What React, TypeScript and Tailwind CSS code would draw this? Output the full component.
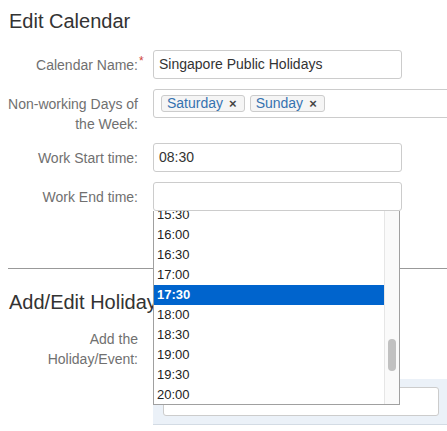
const times = ["15:30", "16:00", "16:30", "17:00", "17:30", "18:00", "18:30", "19:00", "19:30", "20:00"];

function Label({ children }: { children: React.ReactNode }) {
  return (
    <div className="w-[138px] shrink-0 pt-[5px] text-right text-[14px] leading-[20px] text-[#707070]">
      {children}
    </div>
  );
}

function TextInput({ value }: { value?: string }) {
  return (
    <div className="ml-[15px] h-[29px] w-[249px] rounded-[3px] border border-[#ccc] bg-white pl-[5px] text-[14px] leading-[27px] text-[#333]">
      {value}
    </div>
  );
}

function Chip({ label }: { label: string }) {
  return (
    <span className="flex h-[17px] items-center rounded-[3px] border border-[#ccc] bg-[#f5f5f5] pl-[5px] pr-[7px] text-[14px] leading-[15px] text-[#3572b0]">
      {label}
      <span className="ml-[6px] text-[13px] font-bold text-[#444]">×</span>
    </span>
  );
}

function TimeDropdown() {
  return (
    <div className="absolute left-0 top-[29px] z-10 flex h-[194px] w-[247px] overflow-hidden border-x border-b border-[#a0a0a0] bg-white">
      <div className="flex-1 overflow-hidden">
        <div className="mt-[-6px]">
          {times.map((t) => (
            <div
              key={t}
              className={
                t === "17:30"
                  ? "h-[20px] bg-[#0064cd] pl-[3px] text-[13px] font-bold leading-[20px] text-white"
                  : "h-[20px] pl-[3px] text-[13px] leading-[20px] text-[#222]"
              }
            >
              {t}
            </div>
          ))}
        </div>
      </div>
      <div className="flex w-[15px] shrink-0 justify-center border-l border-[#e6e6e6] bg-[#fafafa] pt-[128px]">
        <div className="h-[32px] w-[8px] rounded-full bg-[#c1c1c1]" />
      </div>
    </div>
  );
}

export default function App() {
  return (
    <div className="relative h-[431px] w-full overflow-hidden bg-white font-['Liberation_Sans',Arial,sans-serif]">
      <h2 className="pl-[9px] pt-[9px] text-[20px] font-normal leading-[24px] text-[#333]">Edit Calendar</h2>

      <div className="mt-[17px]">
        <div className="flex">
          <Label>
            <span className="relative">
              Calendar Name:
              <span className="absolute left-full top-[-6px] pl-[1px] text-[12px] text-[#d04437]">*</span>
            </span>
          </Label>
          <TextInput value="Singapore Public Holidays" />
        </div>

        <div className="mt-[10px] flex">
          <Label>
            Non-working Days of
            <br />
            the Week:
          </Label>
          <div className="ml-[15px] flex h-[29px] w-[320px] shrink-0 items-center gap-[5px] rounded-[3px] border border-[#ccc] pl-[7px]">
            <Chip label="Saturday" />
            <Chip label="Sunday" />
          </div>
        </div>

        <div className="mt-[9px] flex">
          <Label>Work Start time:</Label>
          <TextInput value="08:30" />
        </div>

        <div className="mt-[10px] flex">
          <Label>Work End time:</Label>
          <div className="relative">
            <TextInput />
            <div className="absolute left-[15px] top-0">
              <TimeDropdown />
            </div>
          </div>
        </div>
      </div>

      <hr className="ml-[8px] mt-[57px] border-t border-[#999]" />

      <h2 className="mt-[21px] pl-[9px] text-[20px] font-normal leading-[24px] text-[#333]">Add/Edit Holiday</h2>

      <div className="mt-[10px] flex">
        <Label>
          Add the
          <br />
          Holiday/Event:
        </Label>
        <div className="ml-[15px] flex-1 pt-[55px]">
          <div className="border-b border-[#d3dbe4] bg-[#ebf1f8] py-[8px] pl-[10px] pr-[8px]">
            <div className="h-[29px] rounded-[3px] border border-[#ccc] bg-white" />
          </div>
        </div>
      </div>
    </div>
  );
}
